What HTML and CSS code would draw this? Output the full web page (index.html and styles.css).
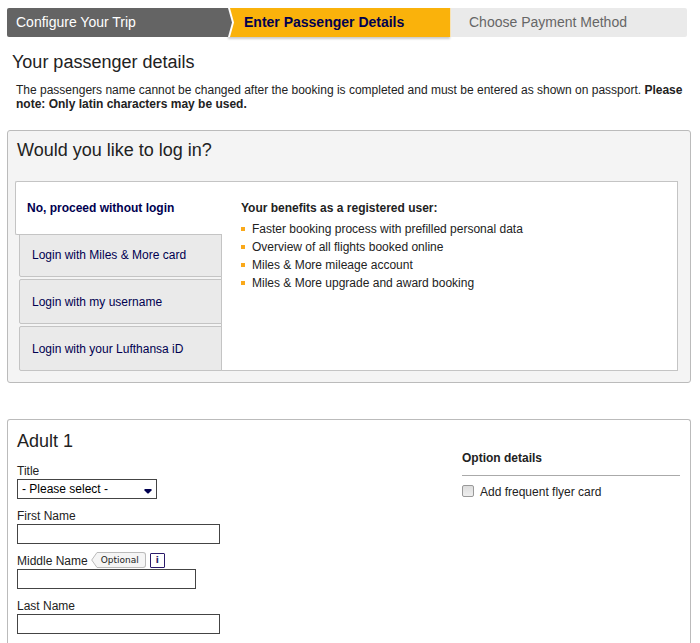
FILE: index.html
```html
<!DOCTYPE html>
<html lang="en">
<head>
	<title>Enter Passenger Details</title>
	<meta charset="UTF-8">
	<link rel="stylesheet" href="styles.css">
</head>
<body>
	<ol class="steps">
		<li class="step done">Configure Your Trip</li>
		<li class="step current">Enter Passenger Details</li>
		<li class="step next">Choose Payment Method</li>
	</ol>

	<h1 class="pageTitle">Your passenger details</h1>
	<p class="intro">The passengers name cannot be changed after the booking is completed and must be entered as shown on passport. <strong>Please note: Only latin characters may be used.</strong></p>

	<section class="panel login">
		<h2>Would you like to log in?</h2>
		<div class="loginBox">
			<div class="tabs">
				<button class="tab active" type="button">No, proceed without login</button>
				<button class="tab" type="button">Login with Miles &amp; More card</button>
				<button class="tab" type="button">Login with my username</button>
				<button class="tab" type="button">Login with your Lufthansa iD</button>
			</div>
			<div class="benefits">
				<h3>Your benefits as a registered user:</h3>
				<ul>
					<li>Faster booking process with prefilled personal data</li>
					<li>Overview of all flights booked online</li>
					<li>Miles &amp; More mileage account</li>
					<li>Miles &amp; More upgrade and award booking</li>
				</ul>
			</div>
		</div>
	</section>

	<form class="panel passenger">
		<div class="fields">
			<h2>Adult 1</h2>
			<div class="field">
				<label for="title">Title</label>
				<div class="selectWrap">
					<select id="title">
						<option>- Please select -</option>
						<option>Mr</option>
						<option>Mrs</option>
					</select>
					<svg class="arrow" width="8" height="5" viewBox="0 0 8 5"><path d="M.5 0h7v1.500L4.500 4.500h-1L.5 1.500z" fill="#000050"/></svg>
				</div>
			</div>
			<div class="field">
				<label for="firstName">First Name</label>
				<input type="text" id="firstName">
			</div>
			<div class="field">
				<div class="labelRow">
					<label for="middleName">Middle Name</label>
					<span class="optional">
						<svg width="7" height="16" viewBox="0 0 7 16"><path d="M7 .5H6L.7 8 6 15.500h1" fill="#f5f5f5" stroke="#bbb"/></svg>
						<span class="optionalText">Optional</span>
					</span>
					<button class="info" type="button">i</button>
				</div>
				<input class="short" type="text" id="middleName">
			</div>
			<div class="field">
				<label for="lastName">Last Name</label>
				<input type="text" id="lastName">
			</div>
		</div>
		<div class="options">
			<h3>Option details</h3>
			<div class="option">
				<input type="checkbox" id="flyerCard">
				<label for="flyerCard">Add frequent flyer card</label>
			</div>
		</div>
	</form>
</body>
</html>
```
FILE: styles.css
```css
* {
	box-sizing: border-box;
}

body {
	display: flex;
	flex-direction: column;
	min-height: 100vh;
	margin: 0;
	padding: 8px 9px 0 7px;
	font: 12px/14px "Liberation Sans", Arial, sans-serif;
	color: #222;
	background-color: #fff;
}

h1, h2, h3, p, ol, ul {
	margin: 0;
	padding: 0;
	list-style: none;
}

h1, h2 {
	font-size: 18px;
	line-height: 22px;
	font-weight: normal;
}

h3 {
	font-size: 12px;
	line-height: 14px;
}

input, select, button {
	margin: 0;
	font: inherit;
	border-radius: 0;
}

/* Booking steps */

.steps {
	display: grid;
	grid-template-columns: 221fr 222fr 237fr;
	margin-right: 4px;
	font-size: 14px;
	line-height: 29px;
}

.step {
	position: relative;
	background-color: #eaeaea;
}

.done {
	z-index: 1;
	padding-left: 9px;
	color: #fff;
	background-color: #646464;
	border-radius: 2px 0 0 2px;
}

.done::before, .done::after {
	content: "";
	position: absolute;
	top: 0;
	left: 100%;
	width: 6px;
	height: 100%;
	background-color: #fff;
	clip-path: polygon(0 0, 2px 0, 6px 50%, 2px 100%, 0 100%);
}

.done::after {
	width: 4px;
	background-color: #646464;
	clip-path: polygon(0 0, 4px 50%, 0 100%);
}

.current {
	padding-left: 16px;
	font-weight: bold;
	color: #000050;
	background-color: #fab20b;
	box-shadow: 0 2px 2px #ccc;
}

.next {
	padding-left: 18px;
	color: #666;
	border-left: 1px solid #f8e3b5;
	border-radius: 0 2px 2px 0;
}

.pageTitle {
	margin: 14px 5px 10px;
}

.intro {
	margin: 0 0 19px 9px;
}

/* Panels */

.panel {
	border: 1px solid #bbb;
	border-radius: 3px;
}

.login {
	padding: 8px 12px 11px 7px;
	margin-bottom: 36px;
	background-color: #f4f4f4;
}

.login h2 {
	margin: 0 2px 20px;
}

.loginBox {
	display: flex;
}

.tabs {
	display: flex;
	flex-direction: column;
	gap: 2px;
	width: 207px;
	background: linear-gradient(to left, #c4c4c4 1px, transparent 1px);
}

.tab {
	height: 45px;
	margin-left: 4px;
	padding: 0 12px;
	text-align: left;
	color: #000050;
	background-color: #eaeaea;
	border: 1px solid #c4c4c4;
	border-radius: 2px 0 0 2px;
	cursor: pointer;
}

.tab.active {
	z-index: 1;
	height: 54px;
	margin: 0 0 -5px;
	padding: 0 11px;
	font-weight: bold;
	background-color: #fff;
	border-right: 0;
}

.benefits {
	flex: 1;
	padding: 19px;
	background-color: #fff;
	border: 1px solid #c4c4c4;
	border-left: 0;
}

.benefits h3 {
	margin-bottom: 5px;
}

.benefits li {
	display: flex;
	align-items: center;
	gap: 7px;
	line-height: 18px;
}

.benefits li::before {
	content: "";
	width: 4px;
	height: 4px;
	background-color: #faa91a;
}

/* Passenger form */

.passenger {
	display: flex;
	flex: 1;
	justify-content: space-between;
	padding: 10px 10px 8px 9px;
	border-bottom: 0;
	border-radius: 3px 3px 0 0;
}

.fields h2 {
	margin-bottom: 11px;
}

.field {
	margin-bottom: 9px;
}

.field label {
	display: block;
	line-height: 16px;
}

.field input, .field select {
	display: block;
	width: 203px;
	height: 20px;
	padding: 0 4px;
	color: #000;
	background-color: #fff;
	border: 1px solid #444;
}

.field .short {
	width: 179px;
}

.selectWrap {
	position: relative;
	width: 140px;
}

.field select {
	width: 100%;
	appearance: none;
}

.arrow {
	position: absolute;
	right: 5px;
	top: 10px;
	pointer-events: none;
}

.labelRow {
	display: flex;
	align-items: center;
	gap: 3px;
	height: 16px;
}

.optional {
	display: flex;
	margin-bottom: 2px;
	font: 9px/14px "DejaVu Sans", Verdana, sans-serif;
}

.optionalText {
	padding: 0 6px 0 3px;
	background-color: #f5f5f5;
	border: 1px solid #bbb;
	border-left: 0;
	border-radius: 0 3px 3px 0;
}

.info {
	width: 15px;
	height: 15px;
	padding: 0;
	margin: 0 0 2px 1px;
	font: bold 9px/12px "DejaVu Sans", Verdana, sans-serif;
	color: #2a1a6a;
	background-color: #fff;
	border: 1px solid #2a1a6a;
	border-radius: 1px;
}

.options {
	width: 218px;
	padding-top: 21px;
}

.options h3 {
	padding-bottom: 10px;
	margin-bottom: 8px;
	border-bottom: 1px solid #aaa;
}

.option {
	display: flex;
	align-items: center;
	gap: 6px;
	line-height: 16px;
}

.option input {
	width: 12px;
	height: 12px;
	margin-bottom: 2px;
	appearance: none;
	background: linear-gradient(#ddd, #eee);
	border: 1px solid #999;
	border-radius: 2px;
}

.option input:checked {
	background: #000050;
}
```
